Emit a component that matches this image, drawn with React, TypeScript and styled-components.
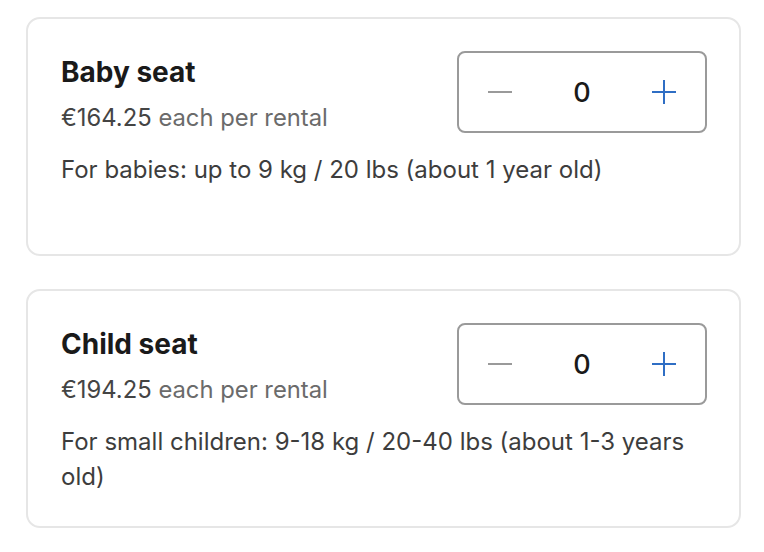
import React from "react";
import styled, { createGlobalStyle } from "styled-components";

const Global = createGlobalStyle`
  html, body { margin: 0; padding: 0; background: #ffffff; }
  body { font-family: Inter, "Noto Sans", "Liberation Sans", sans-serif; -webkit-font-smoothing: antialiased; }
  * { box-sizing: border-box; }
`;

const Page = styled.div`
  display: flex;
  flex-direction: column;
  gap: 33px;
  padding: 17px 0 0 26px;
  width: 741px;
`;

const Card = styled.div`
  border: 2px solid #e6e6e6;
  border-radius: 14px;
  min-height: 239px;
  padding: 32px 32px 32px 33px;
  display: flex;
  flex-direction: column;
`;

const TopRow = styled.div`
  display: flex;
  justify-content: space-between;
  align-items: flex-start;
`;

const Info = styled.div`
  display: flex;
  flex-direction: column;
  padding-top: 4px;
`;

const Title = styled.h3`
  margin: 0;
  font-size: 28px;
  line-height: 34px;
  font-weight: 700;
  color: #1a1a1a;
`;

const Price = styled.div`
  margin-top: 14px;
  font-size: 23.8px;
  line-height: 30px;
  color: #6b6b6b;
`;

const Amount = styled.span`
  color: #444444;
`;

const Description = styled.p`
  margin: 19px 0 0;
  font-size: 24px;
  line-height: 35px;
  color: #3d3d3d;
`;

const Stepper = styled.div`
  width: 250px;
  height: 82px;
  border: 2px solid #9a9a9a;
  border-radius: 8px;
  display: grid;
  grid-template-columns: 1fr 1fr 1fr;
  align-items: center;
`;

const StepButton = styled.button<{ $tone: "muted" | "active" }>`
  border: none;
  background: transparent;
  padding: 0;
  height: 100%;
  display: flex;
  align-items: center;
  justify-content: center;
  color: ${(p) => (p.$tone === "active" ? "#2f6ec4" : "#9a9a9a")};
  cursor: pointer;
`;

const Count = styled.span`
  text-align: center;
  font-size: 27px;
  font-weight: 500;
  color: #1a1a1a;
`;

const MinusIcon = () => (
  <svg width="26" height="26" viewBox="0 0 26 26" fill="none">
    <line x1="1" y1="13" x2="25" y2="13" stroke="currentColor" strokeWidth="2" />
  </svg>
);

const PlusIcon = () => (
  <svg width="26" height="26" viewBox="0 0 26 26" fill="none">
    <line x1="1" y1="13" x2="25" y2="13" stroke="currentColor" strokeWidth="2" />
    <line x1="13" y1="1" x2="13" y2="25" stroke="currentColor" strokeWidth="2" />
  </svg>
);

type Item = { title: string; price: string; desc: string };

const items: Item[] = [
  { title: "Baby seat", price: "€164.25", desc: "For babies: up to 9 kg / 20 lbs (about 1 year old)" },
  { title: "Child seat", price: "€194.25", desc: "For small children: 9-18 kg / 20-40 lbs (about 1-3 years old)" },
];

export default function App() {
  return (
    <>
      <Global />
      <Page>
        {items.map((it) => (
          <Card key={it.title}>
            <TopRow>
              <Info>
                <Title>{it.title}</Title>
                <Price>
                  <Amount>{it.price}</Amount> each per rental
                </Price>
              </Info>
              <Stepper>
                <StepButton $tone="muted" aria-label="decrease"><MinusIcon /></StepButton>
                <Count>0</Count>
                <StepButton $tone="active" aria-label="increase"><PlusIcon /></StepButton>
              </Stepper>
            </TopRow>
            <Description>{it.desc}</Description>
          </Card>
        ))}
      </Page>
    </>
  );
}
